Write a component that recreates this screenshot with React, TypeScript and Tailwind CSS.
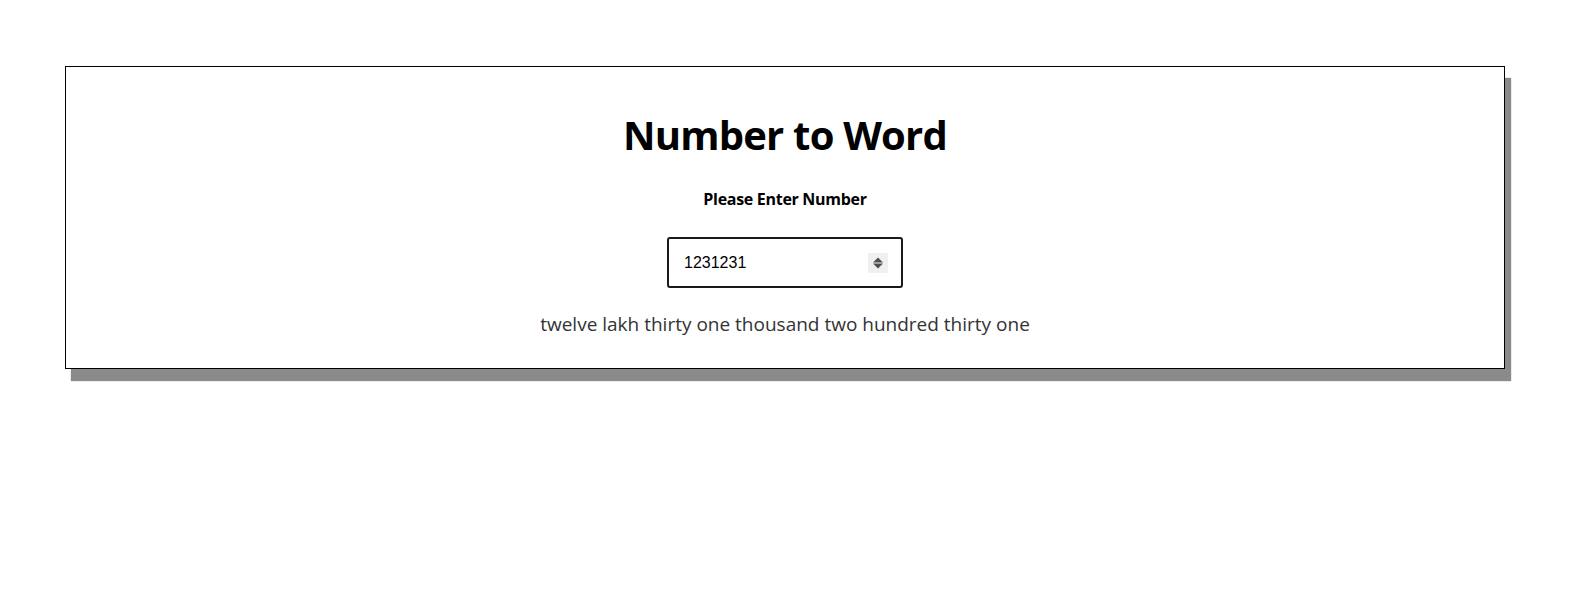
import React, { useState } from "react";

function toWords(n: number): string {
  const ones = ["", "one", "two", "three", "four", "five", "six", "seven", "eight", "nine", "ten", "eleven", "twelve", "thirteen", "fourteen", "fifteen", "sixteen", "seventeen", "eighteen", "nineteen"];
  const tens = ["", "", "twenty", "thirty", "forty", "fifty", "sixty", "seventy", "eighty", "ninety"];
  const two = (x: number) => (x < 20 ? ones[x] : tens[Math.floor(x / 10)] + (x % 10 ? " " + ones[x % 10] : ""));
  const three = (x: number) => {
    const h = Math.floor(x / 100);
    const r = x % 100;
    return [h ? ones[h] + " hundred" : "", r ? two(r) : ""].filter(Boolean).join(" ");
  };
  if (n === 0) return "zero";
  const crore = Math.floor(n / 10000000);
  const lakh = Math.floor((n % 10000000) / 100000);
  const thousand = Math.floor((n % 100000) / 1000);
  const rest = n % 1000;
  const parts: string[] = [];
  if (crore) parts.push(two(crore) + " crore");
  if (lakh) parts.push(two(lakh) + " lakh");
  if (thousand) parts.push(two(thousand) + " thousand");
  if (rest) parts.push(three(rest));
  return parts.join(" ");
}

export default function App() {
  const [value, setValue] = useState("1231231");
  const num = parseInt(value, 10);
  const words = isNaN(num) ? "" : toWords(num);
  return (
    <div className="w-full min-h-[610px] bg-white pt-[66px] pl-[65px]">
      <div className="w-[1440px] border border-black bg-white shadow-[6px_12px_1px_#8a8a8a] flex flex-col items-center pt-[43px] pb-[30px]">
        <h1 className="font-['Open_Sans',sans-serif] font-bold text-[40px] leading-[50px] tracking-[-0.8px] text-black">
          Number to Word
        </h1>
        <label className="mt-[27px] font-['Open_Sans',sans-serif] font-bold text-[16px] leading-[24px] tracking-[-0.3px] text-black">
          Please Enter Number
        </label>
        <div className="relative mt-[26px]">
          <input
            type="number"
            value={value}
            onChange={(e) => setValue(e.target.value)}
            className="w-[236px] h-[51px] border-2 border-[#1a1a1a] rounded-[3px] pl-[15px] pr-[32px] font-['Liberation_Sans',Arial,sans-serif] text-[16px] text-black outline-none [appearance:textfield] [&::-webkit-inner-spin-button]:appearance-none [&::-webkit-outer-spin-button]:appearance-none"
          />
          <div className="absolute right-[15px] top-[16px] w-[20px] h-[20px] bg-[#f0f0f0] flex items-center justify-center pointer-events-none">
            <svg width="10" height="12" viewBox="0 0 10 12">
              <path d="M5 0.5 L10 5.5 L0 5.5 Z" fill="#505050" />
              <path d="M0 6.5 L10 6.5 L5 11.5 Z" fill="#505050" />
            </svg>
          </div>
        </div>
        <p className="mt-[22px] font-['Open_Sans',sans-serif] text-[19px] leading-[28px] text-[#333333]">
          {words}
        </p>
      </div>
    </div>
  );
}
